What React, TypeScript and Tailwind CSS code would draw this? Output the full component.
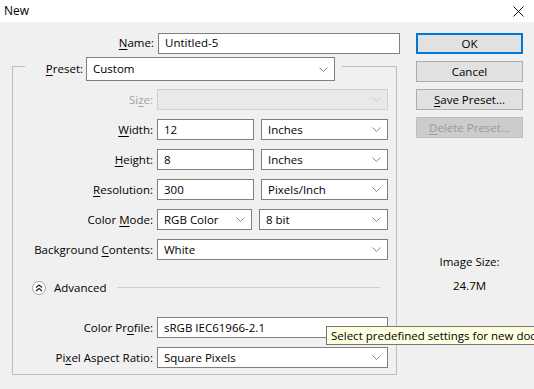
import type { ReactNode } from "react";

function Chevron({ color = "#7a7a7a" }: { color?: string }) {
  return (
    <svg width="9" height="5" viewBox="0 0 9 5" className="shrink-0">
      <path d="M0.5 0.5 L4.5 4.5 L8.5 0.5" fill="none" stroke={color} strokeWidth="1" />
    </svg>
  );
}

function Select({ value, w, h = "h-[21px]", disabled }: { value?: string; w: string; h?: string; disabled?: boolean }) {
  return (
    <div
      className={`${w} ${h} flex items-center justify-between border pl-[6px] pr-[6px] ${
        disabled ? "border-[#d0d0d0] bg-[#e9e9e9]" : "border-[#7f7f7f] bg-white"
      }`}
    >
      <span className="truncate">{value}</span>
      <Chevron color={disabled ? "#c4c4c4" : "#8a8a8a"} />
    </div>
  );
}

function Input({ value, w }: { value: string; w: string }) {
  return (
    <div className={`${w} h-[21px] flex items-center border border-[#7f7f7f] bg-white pl-[6px] whitespace-nowrap overflow-hidden`}>
      {value}
    </div>
  );
}

function Mn({ pre = "", k, post = "" }: { pre?: string; k: string; post?: string }) {
  return (
    <>
      {pre}
      <span className="underline underline-offset-2">{k}</span>
      {post}
    </>
  );
}

function Row({ label, children, className = "", dim }: { label: ReactNode; children: ReactNode; className?: string; dim?: boolean }) {
  return (
    <div className={`flex items-center h-[21px] ${className}`}>
      <div className={`w-[141px] text-right pr-[1px] ${dim ? "text-[#a3a3a3]" : ""}`}>{label}</div>
      <div className="ml-[3px] flex items-center gap-[7px]">{children}</div>
    </div>
  );
}

function Button({ children, primary, disabled }: { children: ReactNode; primary?: boolean; disabled?: boolean }) {
  return (
    <div
      className={`w-[107px] h-[21px] flex items-center justify-center ${
        primary
          ? "border-2 border-[#0078d7] bg-[#e1e1e1]"
          : disabled
          ? "border border-[#bfbfbf] bg-[#cccccc] text-[#9a9a9a]"
          : "border border-[#adadad] bg-[#e1e1e1]"
      }`}
    >
      {children}
    </div>
  );
}

export default function App() {
  return (
    <div className="relative w-[534px] h-[389px] overflow-hidden bg-[#f0f0f0] text-[11.5px] text-black font-['Open_Sans',sans-serif]">
      <div className="h-[22px] bg-white flex items-center justify-between pl-[4px] pr-[10px]">
        <span className="text-[12px]">New</span>
        <svg width="11" height="11" viewBox="0 0 11 11">
          <path d="M0.5 0.5 L10.5 10.5 M10.5 0.5 L0.5 10.5" stroke="#111" strokeWidth="1" />
        </svg>
      </div>

      <div className="flex pl-[12px] pt-[11px]">
        <div className="w-[388px]">
          <div className="flex items-center h-[20px]">
            <div className="w-[142px] text-right">
              <Mn k="N" post="ame:" />
            </div>
            <div className="ml-[4px]">
              <Input value="Untitled-5" w="w-[242px]" />
            </div>
          </div>

          <div className="w-[385px] mt-[4px]">
            <div className="flex items-start h-[24px]">
              <div className="w-[13px] h-[15px] mt-[9px] border-t border-l border-[#bcbcbc]" />
              <div className="flex items-center pr-[7px]">
                <div className="w-[58px] text-right">
                  <Mn k="P" post="reset:" />
                </div>
                <div className="ml-[3px]">
                  <Select value="Custom" w="w-[249px]" h="h-[24px]" />
                </div>
              </div>
              <div className="flex-1 h-[15px] mt-[9px] border-t border-r border-[#bcbcbc]" />
            </div>

            <div className="border-l border-r border-b border-[#bcbcbc] pt-[8px] pb-[6px]">
              <Row dim label={<Mn pre="Si" k="z" post="e:" />}>
                <Select w="w-[231px]" disabled />
              </Row>
              <Row className="mt-[9px]" label={<Mn k="W" post="idth:" />}>
                <Input value="12" w="w-[97px]" />
                <Select value="Inches" w="w-[127px]" />
              </Row>
              <Row className="mt-[9px]" label={<Mn k="H" post="eight:" />}>
                <Input value="8" w="w-[97px]" />
                <Select value="Inches" w="w-[127px]" />
              </Row>
              <Row className="mt-[9px]" label={<Mn k="R" post="esolution:" />}>
                <Input value="300" w="w-[97px]" />
                <Select value="Pixels/Inch" w="w-[127px]" />
              </Row>
              <Row className="mt-[9px]" label={<Mn pre="Color " k="M" post="ode:" />}>
                <Select value="RGB Color" w="w-[95px]" />
                <Select value="8 bit" w="w-[129px]" />
              </Row>
              <Row className="mt-[9px]" label={<Mn pre="Background " k="C" post="ontents:" />}>
                <Select value="White" w="w-[231px]" />
              </Row>

              <div className="flex items-center h-[21px] mt-[17px]">
                <div className="ml-[19px] w-[14px] h-[14px] rounded-full border border-[#a6a6a6] bg-white flex items-center justify-center">
                  <svg width="8" height="8" viewBox="0 0 8 8">
                    <path d="M1 3.5 L4 1 L7 3.5 M1 7 L4 4.5 L7 7" fill="none" stroke="#222" strokeWidth="1.3" />
                  </svg>
                </div>
                <span className="ml-[8px]">Advanced</span>
                <div className="flex-1 h-px bg-[#cfcfcf] ml-[10px] mr-[16px]" />
              </div>

              <Row className="mt-[19px]" label={<Mn pre="Color Pr" k="o" post="file:" />}>
                <Input value="sRGB IEC61966-2.1" w="w-[231px]" />
              </Row>
              <Row className="mt-[9px]" label={<Mn pre="Pi" k="x" post="el Aspect Ratio:" />}>
                <Select value="Square Pixels" w="w-[231px]" />
              </Row>
            </div>
          </div>
        </div>

        <div className="ml-[16px] flex flex-col gap-[7px]">
          <Button primary>OK</Button>
          <Button>Cancel</Button>
          <Button>
            <Mn k="S" post="ave Preset..." />
          </Button>
          <Button disabled>
            <Mn k="D" post="elete Preset..." />
          </Button>
          <div className="mt-[109px] text-center leading-[15px]">
            <div>Image Size:</div>
            <div className="mt-[9px]">24.7M</div>
          </div>
        </div>
      </div>

      <div className="absolute left-[326px] top-[326px] h-[19px] flex items-center whitespace-nowrap border border-[#767676] bg-[#ffffe1] pl-[4px] pr-[6px]">
        Select predefined settings for new document
      </div>
    </div>
  );
}
